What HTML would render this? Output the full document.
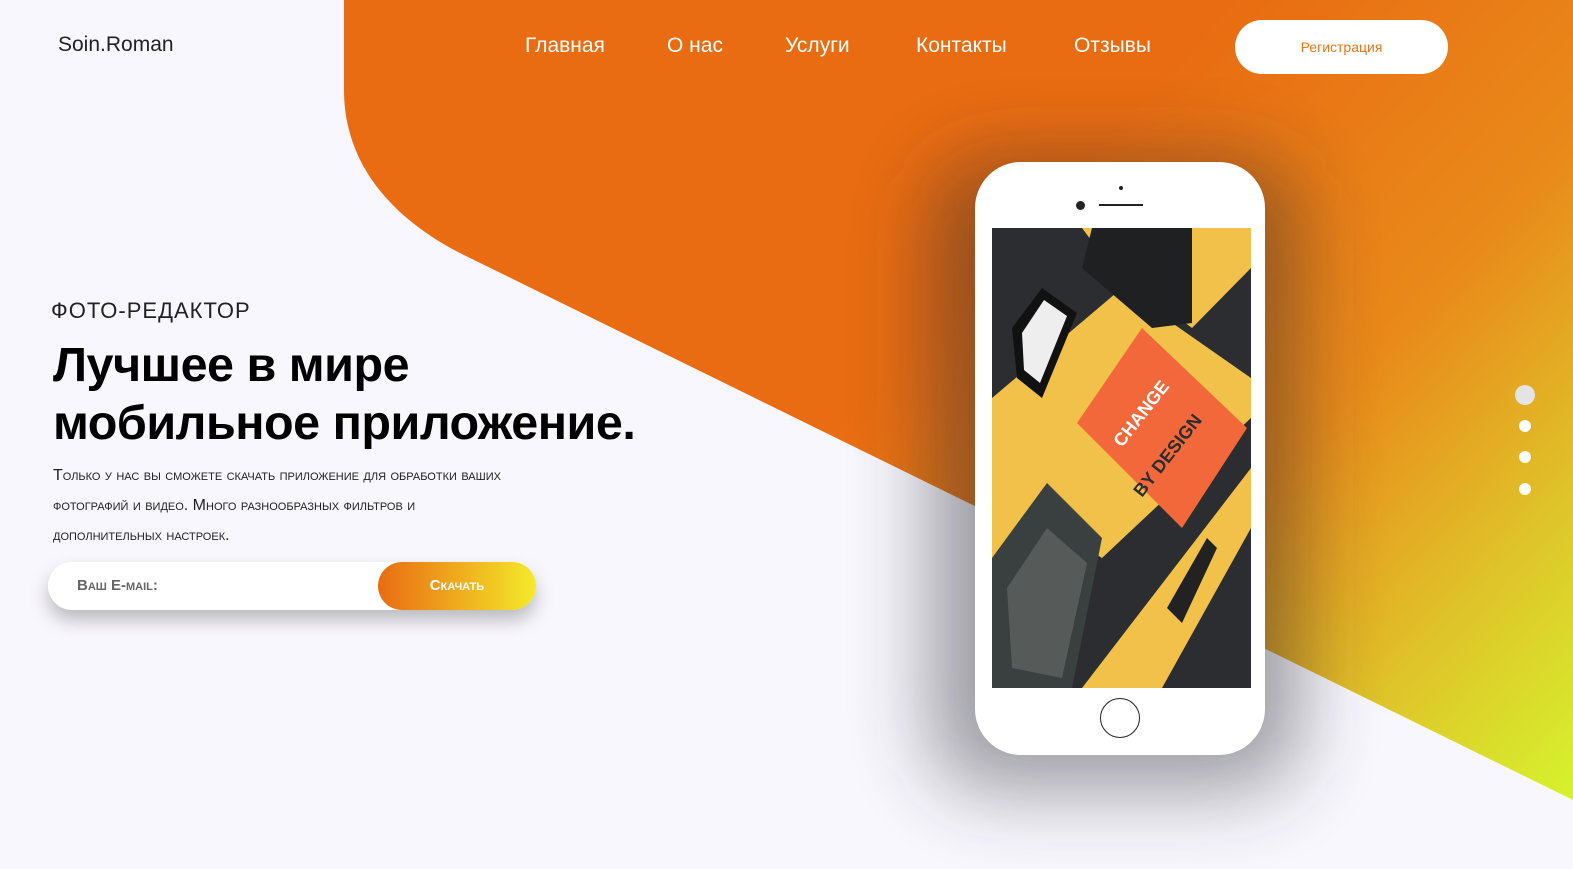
<!DOCTYPE html>
<html><head><meta charset="utf-8"><style>
body{margin:0;width:1573px;height:869px;overflow:hidden;background:#f8f7fd;font-family:"Liberation Sans",sans-serif;position:relative}
.abs{position:absolute}
nav a{position:absolute;top:34px;color:#fff;font-size:21px;text-decoration:none}
</style></head><body>
<svg class="abs" style="left:0;top:0" width="1573" height="869">
<defs>
<linearGradient id="g" x1="1000" y1="250" x2="1573" y2="780" gradientUnits="userSpaceOnUse">
<stop offset="0" stop-color="#e96c12"/><stop offset="0.45" stop-color="#e98a1a"/><stop offset="0.75" stop-color="#dfc42a"/><stop offset="1" stop-color="#d6f02c"/></linearGradient>
<filter id="b" x="-50%" y="-50%" width="200%" height="200%"><feGaussianBlur stdDeviation="40"/></filter>
</defs>
<path d="M344 0 L1573 0 L1573 800 L470 258 C400 225 344 170 344 90 Z" fill="url(#g)"/>
<rect x="930" y="160" width="370" height="630" rx="60" fill="#2a2a30" opacity="0.45" filter="url(#b)"/>
</svg>
<div class="abs" style="left:58px;top:33px;font-size:21px;color:#222">Soin.Roman</div>
<nav><a style="left:525px">Главная</a><a style="left:667px">О нас</a><a style="left:785px">Услуги</a><a style="left:916px">Контакты</a><a style="left:1074px">Отзывы</a></nav>
<div class="abs" style="left:1235px;top:20px;width:213px;height:54px;border-radius:27px;background:#fff;color:#e9751c;font-size:14px;text-align:center;line-height:54px">Регистрация</div>
<div class="abs" style="left:51px;top:298px;font-size:22px;letter-spacing:1px;color:#222">ФОТО-РЕДАКТОР</div>
<div class="abs" style="left:53px;top:336px;font-size:48.5px;font-weight:bold;line-height:58px;color:#000;letter-spacing:-0.5px">Лучшее в мире<br>мобильное приложение.</div>
<div class="abs" style="left:53px;top:461px;font-size:16px;line-height:30px;color:#222;font-variant:small-caps;white-space:nowrap">Только у нас вы сможете скачать приложение для обработки ваших<br>фотографий и видео. Много разнообразных фильтров и<br>дополнительных настроек.</div>
<div class="abs" style="left:48px;top:562px;width:488px;height:48px;border-radius:24px;background:#fff;box-shadow:0 10px 18px rgba(0,0,0,0.25)"></div>
<div class="abs" style="left:77px;top:577px;font-size:15px;color:#666;font-variant:small-caps;font-weight:bold">Ваш E-mail:</div>
<div class="abs" style="left:378px;top:562px;width:158px;height:48px;border-radius:24px;background:linear-gradient(90deg,#e96c12,#f4ea2a);color:#fff;font-size:15px;font-weight:bold;text-align:center;line-height:48px;font-variant:small-caps">Скачать</div>
<div class="abs" style="left:975px;top:162px;width:290px;height:593px;border-radius:46px;background:#fff"></div>
<div class="abs" style="left:1076px;top:201px;width:9px;height:9px;border-radius:50%;background:#222"></div>
<div class="abs" style="left:1119px;top:186px;width:4px;height:4px;border-radius:50%;background:#222"></div>
<div class="abs" style="left:1099px;top:204px;width:44px;height:2px;background:#222"></div>
<div class="abs" style="left:1100px;top:698px;width:38px;height:38px;border-radius:50%;border:1.5px solid #222"></div>
<svg class="abs" style="left:992px;top:228px" width="259" height="460" viewBox="0 0 259 460">
<rect width="259" height="460" fill="#2b2d30"/>
<polygon points="0,170 130,60 259,150 259,300 170,460 90,460 259,240 259,190 110,330 0,260" fill="#f2c14a"/>
<polygon points="90,0 259,0 259,40 200,100 120,40" fill="#f2c14a"/>
<polygon points="0,250 60,300 0,340" fill="#f2c14a"/>
<polygon points="100,0 200,0 200,95 160,100 90,40" fill="#1f2022"/>
<polygon points="150,100 255,200 190,300 85,195" fill="#f2683a"/>
<text x="0" y="0" transform="translate(130,220) rotate(-52)" font-size="18" font-weight="bold" fill="#fff">CHANGE</text>
<text x="0" y="0" transform="translate(150,270) rotate(-52)" font-size="18" font-weight="bold" fill="#2b2d30">BY DESIGN</text>
<polygon points="20,100 50,60 85,85 50,170 25,150" fill="#111"/>
<polygon points="30,105 52,72 75,88 48,155 32,142" fill="#eee"/>
<polygon points="0,330 55,255 110,310 80,460 0,460" fill="#3a3f40"/>
<polygon points="15,360 55,300 95,335 70,450 20,440" fill="#565b5a"/>
<polygon points="175,380 215,310 225,320 190,395" fill="#222"/>
</svg>
<div class="abs" style="left:1515px;top:385px;width:20px;height:20px;border-radius:50%;background:#e4e4e4"></div>
<div class="abs" style="left:1519px;top:420px;width:12px;height:12px;border-radius:50%;background:#fff"></div>
<div class="abs" style="left:1519px;top:451px;width:12px;height:12px;border-radius:50%;background:#fff"></div>
<div class="abs" style="left:1519px;top:483px;width:12px;height:12px;border-radius:50%;background:#fff"></div>
</body></html>
